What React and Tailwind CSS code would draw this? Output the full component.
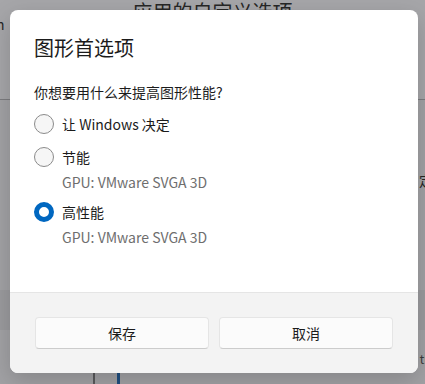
import React from "react";

const font = { fontFamily: '"Noto Sans CJK SC", "Noto Sans", sans-serif' };

function Radio({ checked }) {
  return checked ? (
    <span className="box-border block h-[20px] w-[20px] shrink-0 rounded-full border-[5px] border-[#0067c0] bg-white" />
  ) : (
    <span className="box-border block h-[20px] w-[20px] shrink-0 rounded-full border border-[#8b8b8b] bg-[#f6f6f6]" />
  );
}

function Option({ checked, label }) {
  return (
    <div className="flex h-[33px] items-center gap-[8px]">
      <Radio checked={checked} />
      <span className="text-[14px] leading-[20px] text-[#1b1b1b]">{label}</span>
    </div>
  );
}

function Gpu() {
  return (
    <div className="ml-[28px] h-[19px] text-[14px] leading-[19px] text-[#6e6e6e]">
      GPU: VMware SVGA 3D
    </div>
  );
}

export default function App() {
  return (
    <div className="relative h-[384px] w-[425px] overflow-hidden bg-[#a2a2a5]" style={font}>
      {/* dimmed page behind the dialog */}
      <div className="flex h-full flex-col">
        <div className="flex h-[100px] flex-col border-b border-[#7c7c7f] bg-[#a6a6a9]">
          <div className="flex h-[16px] justify-center">
            <span className="text-[20px] leading-[24px] text-[#262626]">应用的自定义选项</span>
          </div>
          <div className="ml-[-4px] text-[14px] leading-[16px] text-[#262626]">n</div>
        </div>
        <div className="flex h-[190px] flex-col items-end pt-[72px]">
          <span className="mr-[-8px] text-[14px] leading-[16px] text-[#262626]">定</span>
        </div>
        <div className="h-[40px] bg-[#9b9b9e]" />
        <div className="flex flex-1 flex-col">
          <div className="flex justify-end pt-[22px]">
            <span className="mr-[-8px] text-[12px] leading-[14px] text-[#3a3a3a]">tN</span>
          </div>
          <div className="flex flex-1 items-end pl-[93px]">
            <span className="block h-[12px] w-[2px] bg-[#5a5a5c]" />
            <span className="ml-[22px] block h-[12px] w-[3px] bg-[#1f4f80]" />
          </div>
        </div>
      </div>

      {/* dialog */}
      <div className="absolute left-[10px] top-[10px] flex h-[363px] w-[408px] flex-col overflow-hidden rounded-[8px] bg-white shadow-[0_8px_24px_rgba(0,0,0,0.18)]">
        <div className="flex flex-1 flex-col px-[24px] pt-[24px]">
          <div className="h-[28px] text-[20px] leading-[28px] text-[#1b1b1b]">图形首选项</div>
          <div className="mt-[20px] h-[20px] text-[14px] leading-[20px] text-[#1b1b1b]">
            你想要用什么来提高图形性能?
          </div>
          <div className="mt-[5px] flex flex-col">
            <Option label="让 Windows 决定" />
            <Option label="节能" />
            <Gpu />
            <div className="mt-[3px]">
              <Option checked label="高性能" />
            </div>
            <Gpu />
          </div>
        </div>
        <div className="flex h-[81px] gap-[10px] border-t border-[#e5e5e5] bg-[#f3f3f3] px-[25px] pt-[24px]">
          <button className="flex h-[32px] flex-1 items-center justify-center rounded-[4px] border border-[#e5e5e5] border-b-[#cccccc] bg-[#fbfbfb] text-[14px] text-[#1b1b1b]">
            保存
          </button>
          <button className="flex h-[32px] flex-1 items-center justify-center rounded-[4px] border border-[#e5e5e5] border-b-[#cccccc] bg-[#fbfbfb] text-[14px] text-[#1b1b1b]">
            取消
          </button>
        </div>
      </div>
    </div>
  );
}
